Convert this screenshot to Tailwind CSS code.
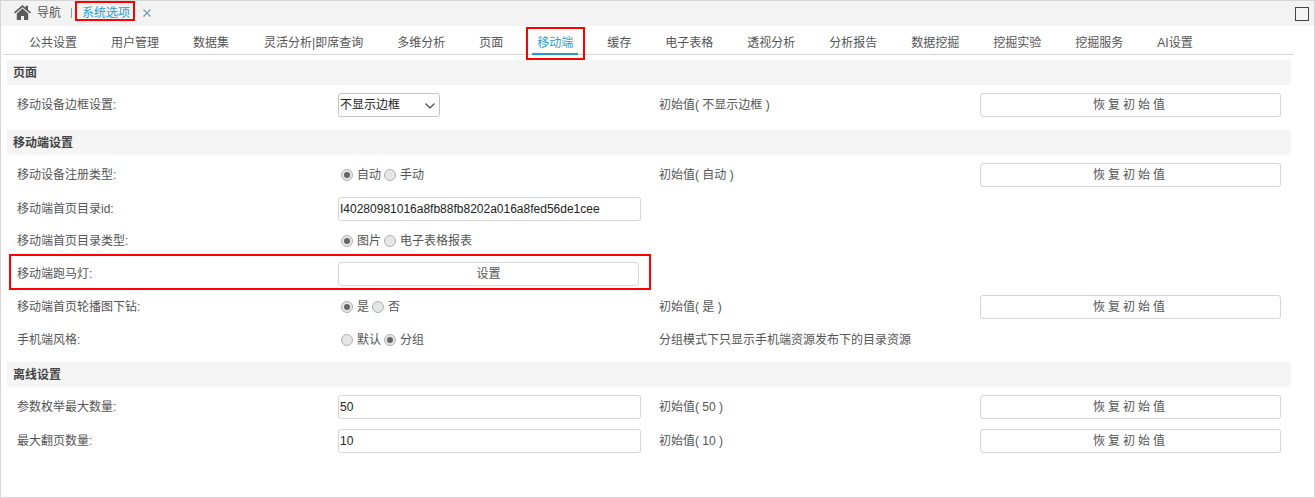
<!DOCTYPE html>
<html lang="zh-CN">
<head>
    <meta charset="UTF-8">
    <title>系统选项</title>
    <script src="https://cdn.jsdelivr.net/npm/@tailwindcss/browser@4"></script>
</head>
<body class="h-[498px] overflow-hidden bg-white text-[12px] text-[#555] font-['Liberation_Sans','Noto_Sans_CJK_SC',sans-serif]">
<div class="relative h-[498px] border border-[#d6d6d6]">
    <!-- Top tab bar -->
    <div class="flex h-[25px] items-center bg-[#f3f3f3] pb-[2px] pl-[13px]">
        <svg class="h-[15px] w-[17px] text-[#5c5c5c]" viewBox="0 0 17 15" fill="currentColor"><path d="M8.5 0 0 7.3l1 1.2 7.5-6.3 7.5 6.3 1-1.2-3-2.6V.8h-2.4v1.9z"/><path d="M8.5 3.6 2.8 8.4V15H7v-4h3v4h4.2V8.4z"/></svg>
        <span class="ml-[6px]">导航</span>
        <span class="ml-[10px] h-[10px] w-px bg-[#999]"></span>
        <span class="ml-[10px] text-[#2a9fd0]">系统选项</span>
        <svg class="ml-[13px] h-[8px] w-[8px] text-[#6f9bb5]" viewBox="0 0 8 8" fill="none" stroke="currentColor" stroke-width="1.2"><path d="M.5.5l7 7M7.5.5l-7 7"/></svg>
        <span class="ml-auto mr-[5px] mt-[2px] h-[14px] w-[14px] border border-[#444]"></span>
    </div>
    <!-- Sub tabs -->
    <div class="ml-[3px] mr-[20px] flex h-[29px] items-center border-b border-[#d6d6d6] pl-[8px] pt-[6px]">
        <a class="px-[17px]">公共设置</a>
        <a class="px-[17px]">用户管理</a>
        <a class="px-[17px]">数据集</a>
        <a class="ml-[1px] px-[17px]">灵活分析|即席查询</a>
        <a class="px-[17px]">多维分析</a>
        <a class="px-[17px]">页面</a>
        <a class="mx-[12px] -mb-px -mt-[6px] flex h-[29px] items-center border-b-2 border-[#1e9bcf] px-[5px] pt-[6px] text-[#2a9fd0]">移动端</a>
        <a class="px-[17px]">缓存</a>
        <a class="px-[17px]">电子表格</a>
        <a class="px-[17px]">透视分析</a>
        <a class="px-[17px]">分析报告</a>
        <a class="px-[17px]">数据挖掘</a>
        <a class="px-[17px]">挖掘实验</a>
        <a class="px-[17px]">挖掘服务</a>
        <a class="px-[17px]">AI设置</a>
    </div>

    <div class="ml-[6px] mr-[23px] mt-[5px]">
        <!-- 页面 -->
        <div class="flex h-[25px] items-center bg-[#f5f5f5] pl-[6px] font-bold text-[#444]">页面</div>
        <div class="mt-[8px] grid h-[24px] grid-cols-[321px_321px_321px_301px] items-center pl-[10px]">
            <span>移动设备边框设置:</span>
            <div class="relative flex h-[24px] w-[102px] items-center rounded-[3px] border border-[#c4c4c4] pl-[1px] text-[#222]">不显示边框
                <svg class="absolute right-[4px] top-[9px] h-[6px] w-[10px] text-[#444]" viewBox="0 0 10 6" fill="none" stroke="currentColor" stroke-width="1.1"><path d="M.5.5 5 5 9.500.5"/></svg>
            </div>
            <span>初始值( 不显示边框 )</span>
            <button class="h-[24px] rounded-[3px] border border-[#d6d6d6] tracking-[3px]">恢复初始值</button>
        </div>

        <!-- 移动端设置 -->
        <div class="mt-[13px] flex h-[25px] items-center bg-[#f5f5f5] pl-[6px] font-bold text-[#444]">移动端设置</div>
        <div class="mt-[8px] grid h-[24px] grid-cols-[321px_321px_321px_301px] items-center pl-[10px]">
            <span>移动设备注册类型:</span>
            <div class="flex items-center pl-[3px]">
                <span class="flex h-[12px] w-[12px] items-center justify-center rounded-full border border-[#b0b0b0] bg-[#e6e6e6]"><span class="h-[6px] w-[6px] rounded-full bg-[#666]"></span></span>
                <span class="ml-[4px]">自动</span>
                <span class="ml-[3px] h-[12px] w-[12px] rounded-full border border-[#b0b0b0] bg-[#e6e6e6]"></span>
                <span class="ml-[4px]">手动</span>
            </div>
            <span>初始值( 自动 )</span>
            <button class="h-[24px] rounded-[3px] border border-[#d6d6d6] tracking-[3px]">恢复初始值</button>
        </div>
        <div class="mt-[10px] grid h-[24px] grid-cols-[321px_321px_321px_301px] items-center pl-[10px]">
            <span>移动端首页目录id:</span>
            <div class="flex h-[24px] w-[303px] items-center rounded-[3px] border border-[#d6d6d6] pl-[1px] text-[#222]">I40280981016a8fb88fb8202a016a8fed56de1cee</div>
        </div>
        <div class="mt-[8px] grid h-[24px] grid-cols-[321px_321px_321px_301px] items-center pl-[10px]">
            <span>移动端首页目录类型:</span>
            <div class="flex items-center pl-[3px]">
                <span class="flex h-[12px] w-[12px] items-center justify-center rounded-full border border-[#b0b0b0] bg-[#e6e6e6]"><span class="h-[6px] w-[6px] rounded-full bg-[#666]"></span></span>
                <span class="ml-[4px]">图片</span>
                <span class="ml-[3px] h-[12px] w-[12px] rounded-full border border-[#b0b0b0] bg-[#e6e6e6]"></span>
                <span class="ml-[4px]">电子表格报表</span>
            </div>
        </div>
        <div class="mt-[9px] grid h-[24px] grid-cols-[321px_321px_321px_301px] items-center pl-[10px]">
            <span>移动端跑马灯:</span>
            <button class="h-[24px] w-[301px] rounded-[3px] border border-[#d6d6d6]">设置</button>
        </div>
        <div class="mt-[9px] grid h-[24px] grid-cols-[321px_321px_321px_301px] items-center pl-[10px]">
            <span>移动端首页轮播图下钻:</span>
            <div class="flex items-center pl-[3px]">
                <span class="flex h-[12px] w-[12px] items-center justify-center rounded-full border border-[#b0b0b0] bg-[#e6e6e6]"><span class="h-[6px] w-[6px] rounded-full bg-[#666]"></span></span>
                <span class="ml-[4px]">是</span>
                <span class="ml-[3px] h-[12px] w-[12px] rounded-full border border-[#b0b0b0] bg-[#e6e6e6]"></span>
                <span class="ml-[4px]">否</span>
            </div>
            <span>初始值( 是 )</span>
            <button class="h-[24px] rounded-[3px] border border-[#d6d6d6] tracking-[3px]">恢复初始值</button>
        </div>
        <div class="mt-[9px] grid h-[24px] grid-cols-[321px_321px_321px_301px] items-center pl-[10px]">
            <span>手机端风格:</span>
            <div class="flex items-center pl-[3px]">
                <span class="h-[12px] w-[12px] rounded-full border border-[#b0b0b0] bg-[#e6e6e6]"></span>
                <span class="ml-[4px]">默认</span>
                <span class="ml-[3px] flex h-[12px] w-[12px] items-center justify-center rounded-full border border-[#b0b0b0] bg-[#e6e6e6]"><span class="h-[6px] w-[6px] rounded-full bg-[#666]"></span></span>
                <span class="ml-[4px]">分组</span>
            </div>
            <span>分组模式下只显示手机端资源发布下的目录资源</span>
        </div>

        <!-- 离线设置 -->
        <div class="mt-[10px] flex h-[25px] items-center bg-[#f5f5f5] pl-[6px] font-bold text-[#444]">离线设置</div>
        <div class="mt-[8px] grid h-[24px] grid-cols-[321px_321px_321px_301px] items-center pl-[10px]">
            <span>参数枚举最大数量:</span>
            <div class="flex h-[24px] w-[303px] items-center rounded-[3px] border border-[#d6d6d6] pl-[1px] text-[#222]">50</div>
            <span>初始值( 50 )</span>
            <button class="h-[24px] rounded-[3px] border border-[#d6d6d6] tracking-[3px]">恢复初始值</button>
        </div>
        <div class="mt-[10px] grid h-[24px] grid-cols-[321px_321px_321px_301px] items-center pl-[10px]">
            <span>最大翻页数量:</span>
            <div class="flex h-[24px] w-[303px] items-center rounded-[3px] border border-[#d6d6d6] pl-[1px] text-[#222]">10</div>
            <span>初始值( 10 )</span>
            <button class="h-[24px] rounded-[3px] border border-[#d6d6d6] tracking-[3px]">恢复初始值</button>
        </div>
    </div>

    <!-- Red annotation boxes -->
    <div class="absolute left-[74px] top-[0px] h-[20px] w-[60px] border-2 border-[#f00]"></div>
    <div class="absolute left-[525px] top-[26px] h-[33px] w-[59px] border-2 border-[#f00]"></div>
    <div class="absolute left-[8px] top-[253px] h-[36px] w-[642px] border-2 border-[#f00]"></div>
</div>
</body>
</html>
